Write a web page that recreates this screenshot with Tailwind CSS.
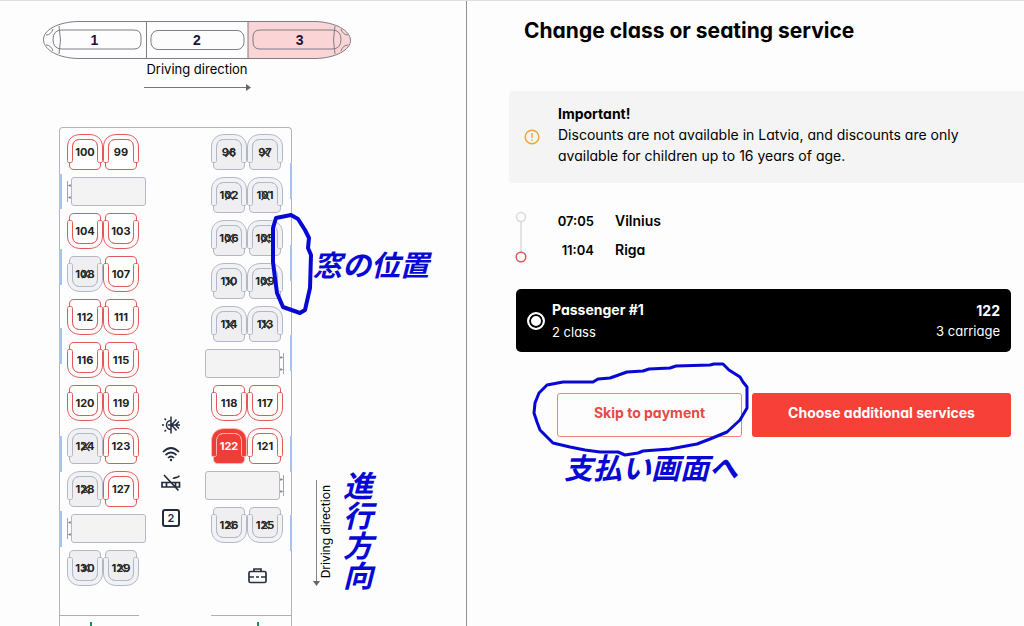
<!DOCTYPE html>
<html lang="en">
<head>
<meta charset="utf-8">
<title>Change class or seating service</title>
<script src="https://cdn.jsdelivr.net/npm/@tailwindcss/browser@4"></script>
</head>
<body class="bg-[#fdfdfd] text-black font-['Inter','Noto_Sans_CJK_JP',sans-serif] [font-feature-settings:'cv11']">
<svg class="hidden">
  <symbol id="seat-up" viewBox="0 0 36 36">
    <path fill="var(--pad)" d="M2.500 28.500V31c0 3 1.500 4.500 4.500 4.500h22c3 0 4.500-1.500 4.500-4.500v-2.500L30.500 25V13c0-5-3-7.500-7-7.500h-11c-4 0-7 2.500-7 7.500v12z"/>
    <path fill="var(--arm)" d="M5.500 26.500c0 1.500-.5 2-2 2H2c-1 0-1.500-.5-1.500-2V13C.5 5 6 .5 14 .5h8C30 .5 35.500 5 35.500 13v13.500c0 1.500-.5 2-1.500 2h-1.500c-1.500 0-2-.5-2-2V13c0-5-3-7.500-7-7.500h-11c-4 0-7 2.500-7 7.500z"/>
  </symbol>
  <symbol id="seat-down" viewBox="0 0 36 36"><use href="#seat-up" width="36" height="36" transform="matrix(1 0 0 -1 0 36)"/></symbol>
  <symbol id="table" viewBox="0 0 80 29">
    <rect x="4.500" y=".5" width="74" height="28" rx="2.500" fill="#f3f3f4" stroke="#b4b8c6"/>
    <path d="M.5 4v21M1 8.500h3M1 20.500h3" stroke="#9fa4b3" fill="none"/><path d="M2 8.500h2M2 20.500h2" stroke="#888da0" stroke-width="2"/>
  </symbol>
</svg>

<div class="flex min-h-screen border-t border-[#dedede] overflow-hidden">
  <section class="relative w-[467px] shrink-0 border-r border-[#8d929c] pt-5 max-h-[625px]" aria-label="Seat map">
    <div class="relative ml-[43px] w-[308px] h-[38px]">
      <svg class="absolute inset-0" width="308" height="38" viewBox="0 0 308 38" fill="none" stroke="#7d7d87">
        <path fill="#fbd5d5" stroke="none" d="M205 .5h68c20 1 34 9 34.500 18.500S293 37 273 37.500h-68z"/>
        <path d="M35 .5h238c20 1 34 9 34.500 18.500S293 37 273 37.500H35C15 37 1 29 .5 19S15 1 35 .5zM103.500 .5v37M205 .5v37"/>
        <path d="M16 5q3 14 0 28M292 5q-3 14 0 28"/>
        <path d="M19 9h72q7 0 7 7v5q0 7-7 7H19q-9 0-9-9.500T19 9zM289 9h-72q-7 0-7 7v5q0 7 7 7h72q9 0 9-9.500T289 9z"/><rect x="108" y="9.500" width="93" height="19" rx="7"/>
        <path d="M3 14q5 0 7-6M3 24q5 0 7 6M305 14q-5 0-7-6M305 24q-5 0-7 6"/>
      </svg>
      <div class="relative grid grid-cols-3 h-full font-['Liberation_Sans',sans-serif] text-sm font-bold text-[#1a1436]">
        <button>1</button><button>2</button><button>3</button>
      </div>
    </div>
    <div class="ml-[144px] w-[106px] text-[13px] leading-5 text-center">Driving direction</div>
    <svg class="ml-[144px] mt-1" width="107" height="8"><path d="M0 4.500h103" stroke="#787878"/><path d="M102 1v7l5-3.500z" fill="#666"/></svg>

    <div class="relative mt-9 ml-[59px] w-[233px] h-[500px] border border-b-0 rounded-t-sm border-[#b3b5bd] pt-[6px] flex">
      <div id="left" class="ml-[7px] w-20 flex flex-col gap-[7px]"></div>
      <div class="w-9 mt-[282px] ml-[6px] flex flex-col items-center text-[#222c3c]">
        <svg width="20" height="18" viewBox="0 0 20 18" fill="none" stroke="currentColor" stroke-width="1.500"><path d="M10 .5v17M10 4.500a4.500 4.500 0 0 0 0 9M1 9h2M7 9h12M3.500 2.500L5 4M3.500 15.500L5 14M10.500 9l5-5.500M10.500 9l5 5.500M18 5.500L14.500 9l3.500 3.500"/></svg>
        <svg class="mt-[12px]" width="18" height="16" viewBox="0 0 18 16" fill="none" stroke="currentColor" stroke-width="1.700"><path d="M1 6q8-8 16 0M3.500 9q5.500-5 11 0M6 12q3-3 6 0"/><circle cx="9" cy="14" r="1.200" fill="currentColor" stroke="none"/></svg>
        <svg class="mt-[12px]" width="20" height="18" viewBox="0 0 20 18" fill="none" stroke="currentColor" stroke-width="1.700"><path d="M1 8.500h17.500v4.500H1zM5.500 8.500v4M14.500 8.500v4M3 1l14.500 15.500M12.500 5c0-2.500 5 0 5.500-3.500"/></svg>
        <span class="mt-[17px] size-[18px] border-2 border-current rounded-[3px] text-[11px] leading-[14px] font-semibold text-center">2</span>
      </div>
      <div class="w-20 ml-[15px]">
        <div id="right" class="flex flex-col gap-[7px]"></div>
        <svg class="ml-[44px] mt-[25px]" width="19" height="16" viewBox="0 0 19 16" fill="none" stroke="#2b323d" stroke-width="1.700"><rect x="1" y="3.500" width="17" height="11" rx="1.500"/><path d="M6 3.500V1h7v2.500M1 9h5M8 9h3M13 9h5"/></svg>
      </div>
      <svg class="absolute -left-px -top-px" width="233" height="500" fill="none">
        <path stroke="#a9c3f0" stroke-width="3" d="M1.500 47v35M1.500 122v36M1.500 201v36M1.500 309v36M1.500 384v36"/>
        <path stroke="#a9c3f0" stroke-width="2" d="M232 36v36M232 118v36M232 208v36M232 309v36M232 388v36"/>
        <path stroke="#adb0b8" d="M0 488.500h80M152 488.500h81"/>
        <path stroke="#16935a" stroke-width="2" d="M32 495v5M199 495v5"/>
      </svg>
    </div>

    <div class="absolute left-[312px] top-[479px] flex items-center">
      <svg width="8" height="107"><path d="M4.500 0v102" stroke="#858585"/><path d="M1 101h7l-3.500 5z" fill="#666"/></svg>
      <span class="[writing-mode:vertical-rl] rotate-180 pt-[3px] text-xs leading-3">Driving direction</span>
    </div>
  </section>

  <main class="flex-1 min-w-0">
    <h1 class="mt-4 ml-[57px] text-[21px] leading-7 font-bold whitespace-nowrap">Change class or seating service</h1>
    <div class="mt-[46px] ml-[42px] h-[92px] rounded-l-sm bg-[#f4f4f4] flex items-center pl-[15px] gap-[18px] text-sm leading-[21px]">
      <svg width="16" height="16" fill="none" stroke="#eda633" stroke-width="1.400"><circle cx="8" cy="8" r="6.800"/><path d="M8 4v5M8 10.500v1.500"/></svg>
      <div class="pb-[5px]"><strong>Important!</strong><p>Discounts are not available in Latvia, and discounts are only<br>available for children up to 16 years of age.</p></div>
    </div>
    <div class="mt-6 ml-[48px] flex">
      <svg class="mt-1" width="13" height="53" fill="none" stroke-width="1.500"><path d="M6 11v31" stroke="#dadade"/><circle cx="6" cy="6" r="4.500" stroke="#dadade"/><circle cx="6" cy="46" r="4.800" stroke="#dd5558"/></svg>
      <div class="ml-[28px] grid grid-cols-[38px_auto] gap-x-[21px] text-sm leading-7 font-semibold"><time class="text-[13px] text-right">07:05</time><span>Vilnius</span><time class="text-[13px] text-right">11:04</time><span>Riga</span></div>
    </div>
    <label class="mt-[25px] ml-[49px] mr-[13px] h-[63px] rounded-[5px] bg-black text-white flex items-center pl-[11px] pr-[11px]">
      <input type="radio" name="passenger" checked class="appearance-none size-[18px] rounded-full border-2 border-white bg-white shadow-[inset_0_0_0_2px_#000]">
      <span class="ml-[7px] flex-1 text-[13px] leading-[22px]"><strong class="block text-sm leading-[22px]">Passenger #1</strong>2 class</span>
      <span class="text-right text-[13px] leading-5"><strong class="block text-sm leading-5">122</strong>3 carriage</span>
    </label>
    <div class="mt-[41px] ml-[90px] mr-[13px] flex gap-[10px] text-sm font-bold">
      <button class="w-[185px] h-11 pb-1 rounded-[3px] border border-[#e98580] text-[#e64a46]">Skip to payment</button>
      <button class="flex-1 h-11 pb-1 rounded-[3px] bg-[#f64038] text-white">Choose additional services</button>
    </div>
  </main>
</div>

<!-- Handwritten notes laid over the page -->
<div class="absolute inset-0 pointer-events-none overflow-hidden text-[#0808d4] font-['Noto_Sans_CJK_JP',sans-serif] font-bold italic" lang="ja">
  <svg class="absolute left-0 top-0" width="1024" height="626" fill="none" stroke="#0808d4" stroke-width="4" stroke-linejoin="round">
    <path d="M276 218L291 215L298 219L305 230L309 238L308 248L311 255L310 288L305 310L300 313L283 307L277 293L275 278L273 262L273 228z"/>
    <path stroke-width="3" d="M547 385L563 382H593L598 379L610 378L627 372L643 371L649 369L670 368L676 366L710 365L714 364H723L729 370L740 377L743 382L747 387V408L740 420L727 432L710 439L697 444L670 449L643 451L638 453L625 455L618 452H600L585 450L570 447L553 443L540 430L537 422L534 413L535 403L539 393z"/>
  </svg>
  <span class="absolute left-[313px] top-[243px] text-[29px] leading-10 whitespace-nowrap">窓の位置</span>
  <span class="absolute left-[564px] top-[446px] text-[29px] leading-10 whitespace-nowrap">支払い画面へ</span>
  <span class="absolute left-[338px] top-[471px] text-[30px] leading-10 whitespace-nowrap [writing-mode:vertical-rl]">進行方向</span>
</div>

<script>
// Row: [first seat, second seat, direction]; "x" marks a taken seat, "*" the chosen one; null is a table.
const rows = {
  left: [["100","99","up"],null,["104","103","down"],["108x","107","down"],["112","111","down"],["116","115","down"],["120","119","down"],["124x","123","up"],["128x","127","up"],null,["130x","129x","down"]],
  right: [["98x","97x","up"],["102x","101x","up"],["106x","105x","up"],["110x","109x","up"],["114x","113x","up"],null,["118","117","down"],["122*","121","up"],null,["126x","125x","down"]]
};
function seat(code, dir) {
  const taken = code.endsWith("x"), chosen = code.endsWith("*"), n = code.replace(/[x*]/, "");
  const color = chosen ? "text-white" : "text-[#222222]";
  const paint = chosen ? "stroke-[#ffb5b0] [--pad:#f03d37] [--arm:#f03d37]" : taken ? "stroke-[#b3b6c4] [--pad:#efeff1] [--arm:#f1f2f5]" : "stroke-[#e05a5c] [--pad:#ffffff] [--arm:#fffafa]";
  const cross = !taken ? "" : dir === "up"
    ? '<svg class="absolute inset-0" width="36" height="36"><path d="M14.500 14l8 9M22.500 14l-8 9" stroke="#333" stroke-width="1.200"/></svg>'
    : '<svg class="absolute inset-0" width="36" height="36"><path d="M15 14l7 8M22 14l-7 8" stroke="#333" stroke-width="1.200"/></svg>';
  return `<button ${taken ? "disabled" : ""} class="relative size-9 text-[11px] leading-4 font-bold ${color}"><svg class="absolute inset-0 ${paint}" width="36" height="36"><use href="#seat-${dir}"/></svg><span class="relative">${n}</span>${cross}</button>`;
}
for (const side of ["left", "right"]) {
  const pad = side === "left" ? "flex" : "flex ml-[7px]";
  document.getElementById(side).innerHTML = rows[side].map(r => r
    ? `<div class="${pad}">${seat(r[0], r[2])}${seat(r[1], r[2])}</div>`
    : `<svg class="${side === "left" ? "" : "rotate-180"}" width="80" height="29"><use href="#table"/></svg>`).join("");
}
</script>
</body>
</html>
